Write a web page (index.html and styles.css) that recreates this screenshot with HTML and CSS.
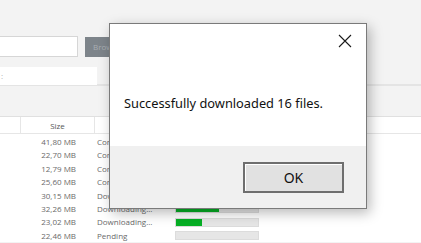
FILE: index.html
```html
<!DOCTYPE html>
<html lang="en">
<head>
  <meta charset="UTF-8">
  <meta name="viewport" content="width=device-width, initial-scale=1.0">
  <title>Downloader</title>
  <link rel="stylesheet" href="styles.css">
</head>
<body>

<div class="app">
  <div class="toolbar">
    <input class="path-input" type="text">
    <button class="browse-btn">Browse</button>
  </div>
  <div class="filter-row">
    <div class="filter-box">:</div>
  </div>
  <div class="spacer"></div>

  <div class="file-table">
    <div class="table-head">
      <div class="col-name"></div>
      <div class="col-size">Size</div>
      <div class="col-status"></div>
      <div class="col-progress"></div>
    </div>
    <div class="table-body">
      <div class="file-row"><div class="col-name"></div><div class="col-size">41,80 MB</div><div class="col-status">Completed</div><div class="col-progress"></div></div>
      <div class="file-row"><div class="col-name"></div><div class="col-size">22,70 MB</div><div class="col-status">Completed</div><div class="col-progress"></div></div>
      <div class="file-row"><div class="col-name"></div><div class="col-size">12,79 MB</div><div class="col-status">Completed</div><div class="col-progress"></div></div>
      <div class="file-row"><div class="col-name"></div><div class="col-size">25,60 MB</div><div class="col-status">Completed</div><div class="col-progress"></div></div>
      <div class="file-row"><div class="col-name"></div><div class="col-size">30,15 MB</div><div class="col-status">Downloading...</div><div class="col-progress"><div class="bar"><div class="bar-fill" style="width: 70%"></div></div></div></div>
      <div class="file-row"><div class="col-name"></div><div class="col-size">32,26 MB</div><div class="col-status">Downloading...</div><div class="col-progress"><div class="bar"><div class="bar-fill" style="width: 53%"></div></div></div></div>
      <div class="file-row"><div class="col-name"></div><div class="col-size">23,02 MB</div><div class="col-status">Downloading...</div><div class="col-progress"><div class="bar"><div class="bar-fill" style="width: 32%"></div></div></div></div>
      <div class="file-row"><div class="col-name"></div><div class="col-size">22,46 MB</div><div class="col-status">Pending</div><div class="col-progress"><div class="bar"></div></div></div>
    </div>
  </div>
</div>

<div class="dialog">
  <div class="dialog-body">
    <button class="close-btn" aria-label="Close">
      <svg width="14" height="14" viewBox="0 0 14 14">
        <path d="M1 1 L13 13 M13 1 L1 13" stroke="#1a1a1a" stroke-width="1.1" fill="none"/>
      </svg>
    </button>
    <p class="message">Successfully downloaded 16 files.</p>
  </div>
  <div class="dialog-footer">
    <button class="ok-btn">OK</button>
  </div>
</div>

</body>
</html>
```

FILE: styles.css
```css
* {
  box-sizing: border-box;
}
body {
  margin: 0;
  width: 421px;
  height: 243px;
  overflow: hidden;
  font-family: "Open Sans", "Noto Sans", sans-serif;
  background-color: #f3f3f3;
  position: relative;
}
.app {
  display: flex;
  flex-direction: column;
}
.toolbar {
  display: flex;
  align-items: center;
  gap: 7px;
  padding-top: 36px;
  margin-left: -20px;
}
.path-input {
  width: 98px;
  height: 21px;
  border: 1px solid #d6d6d6;
  background: #fff;
}
.browse-btn {
  width: 60px;
  height: 20px;
  border: none;
  background: #7d848a;
  color: #a9aeb2;
  font-size: 8px;
  text-align: left;
  padding-left: 8px;
  font-family: inherit;
}
.filter-row {
  margin-top: 7px;
  height: 22px;
  border-bottom: 2px solid #e4e4e4;
}
.filter-box {
  width: 97px;
  height: 18px;
  margin-top: 3px;
  background: #fff;
  color: #b0b0b0;
  font-size: 8px;
  line-height: 18px;
  padding-left: 1px;
}
.spacer {
  height: 31px;
  border-bottom: 1px solid #e0e0e0;
}
.file-table {
  background: #fff;
}
.table-head {
  display: flex;
  height: 17px;
  line-height: 17px;
  font-size: 8px;
  color: #555;
  border-bottom: 1px solid #e6e6e6;
}
.table-head .col-name,
.table-head .col-size {
  border-right: 1px solid #e6e6e6;
}
.table-head .col-size {
  text-align: center;
  padding-right: 0;
}
.table-body {
  padding-top: 1px;
}
.file-row {
  display: flex;
  height: 13.4px;
  line-height: 13.4px;
  font-size: 8px;
  color: #6a6a6a;
}
.col-name {
  width: 21px;
}
.col-size {
  width: 74px;
  text-align: right;
  padding-right: 19px;
}
.col-status {
  width: 80px;
  padding-left: 2px;
  white-space: nowrap;
  overflow: hidden;
}
.col-progress {
  width: 85px;
  display: flex;
  align-items: center;
}
.bar {
  width: 84px;
  height: 9px;
  background: #e6e6e6;
  border: 1px solid #dcdcdc;
}
.bar-fill {
  height: 100%;
  background: #06b025;
}

/* message box */
.dialog {
  position: absolute;
  left: 109px;
  top: 23px;
  width: 258px;
  height: 186px;
  border: 1px solid #7a7a7a;
  background: #fff;
  display: flex;
  flex-direction: column;
  box-shadow: 3px 4px 12px rgba(0, 0, 0, 0.28);
  font-family: "Noto Sans", sans-serif;
}
.dialog-body {
  height: 122px;
  position: relative;
  padding: 70px 0 0 14px;
}
.close-btn {
  position: absolute;
  top: 10px;
  right: 13px;
  border: none;
  background: none;
  padding: 0;
  width: 16px;
  height: 16px;
}
.message {
  margin: 0;
  font-size: 12.8px;
  color: #111;
}
.dialog-footer {
  flex: 1;
  background: #f0f0f0;
  display: flex;
  justify-content: flex-end;
  align-items: flex-start;
  padding: 16px 22px 0 0;
}
.ok-btn {
  width: 101px;
  height: 31px;
  background: #e1e1e1;
  border: 2px solid #6e6e6e;
  box-shadow: inset 1px 1px 0 #fff;
  font-family: "Noto Sans", sans-serif;
  font-size: 14px;
  color: #111;
}
```
